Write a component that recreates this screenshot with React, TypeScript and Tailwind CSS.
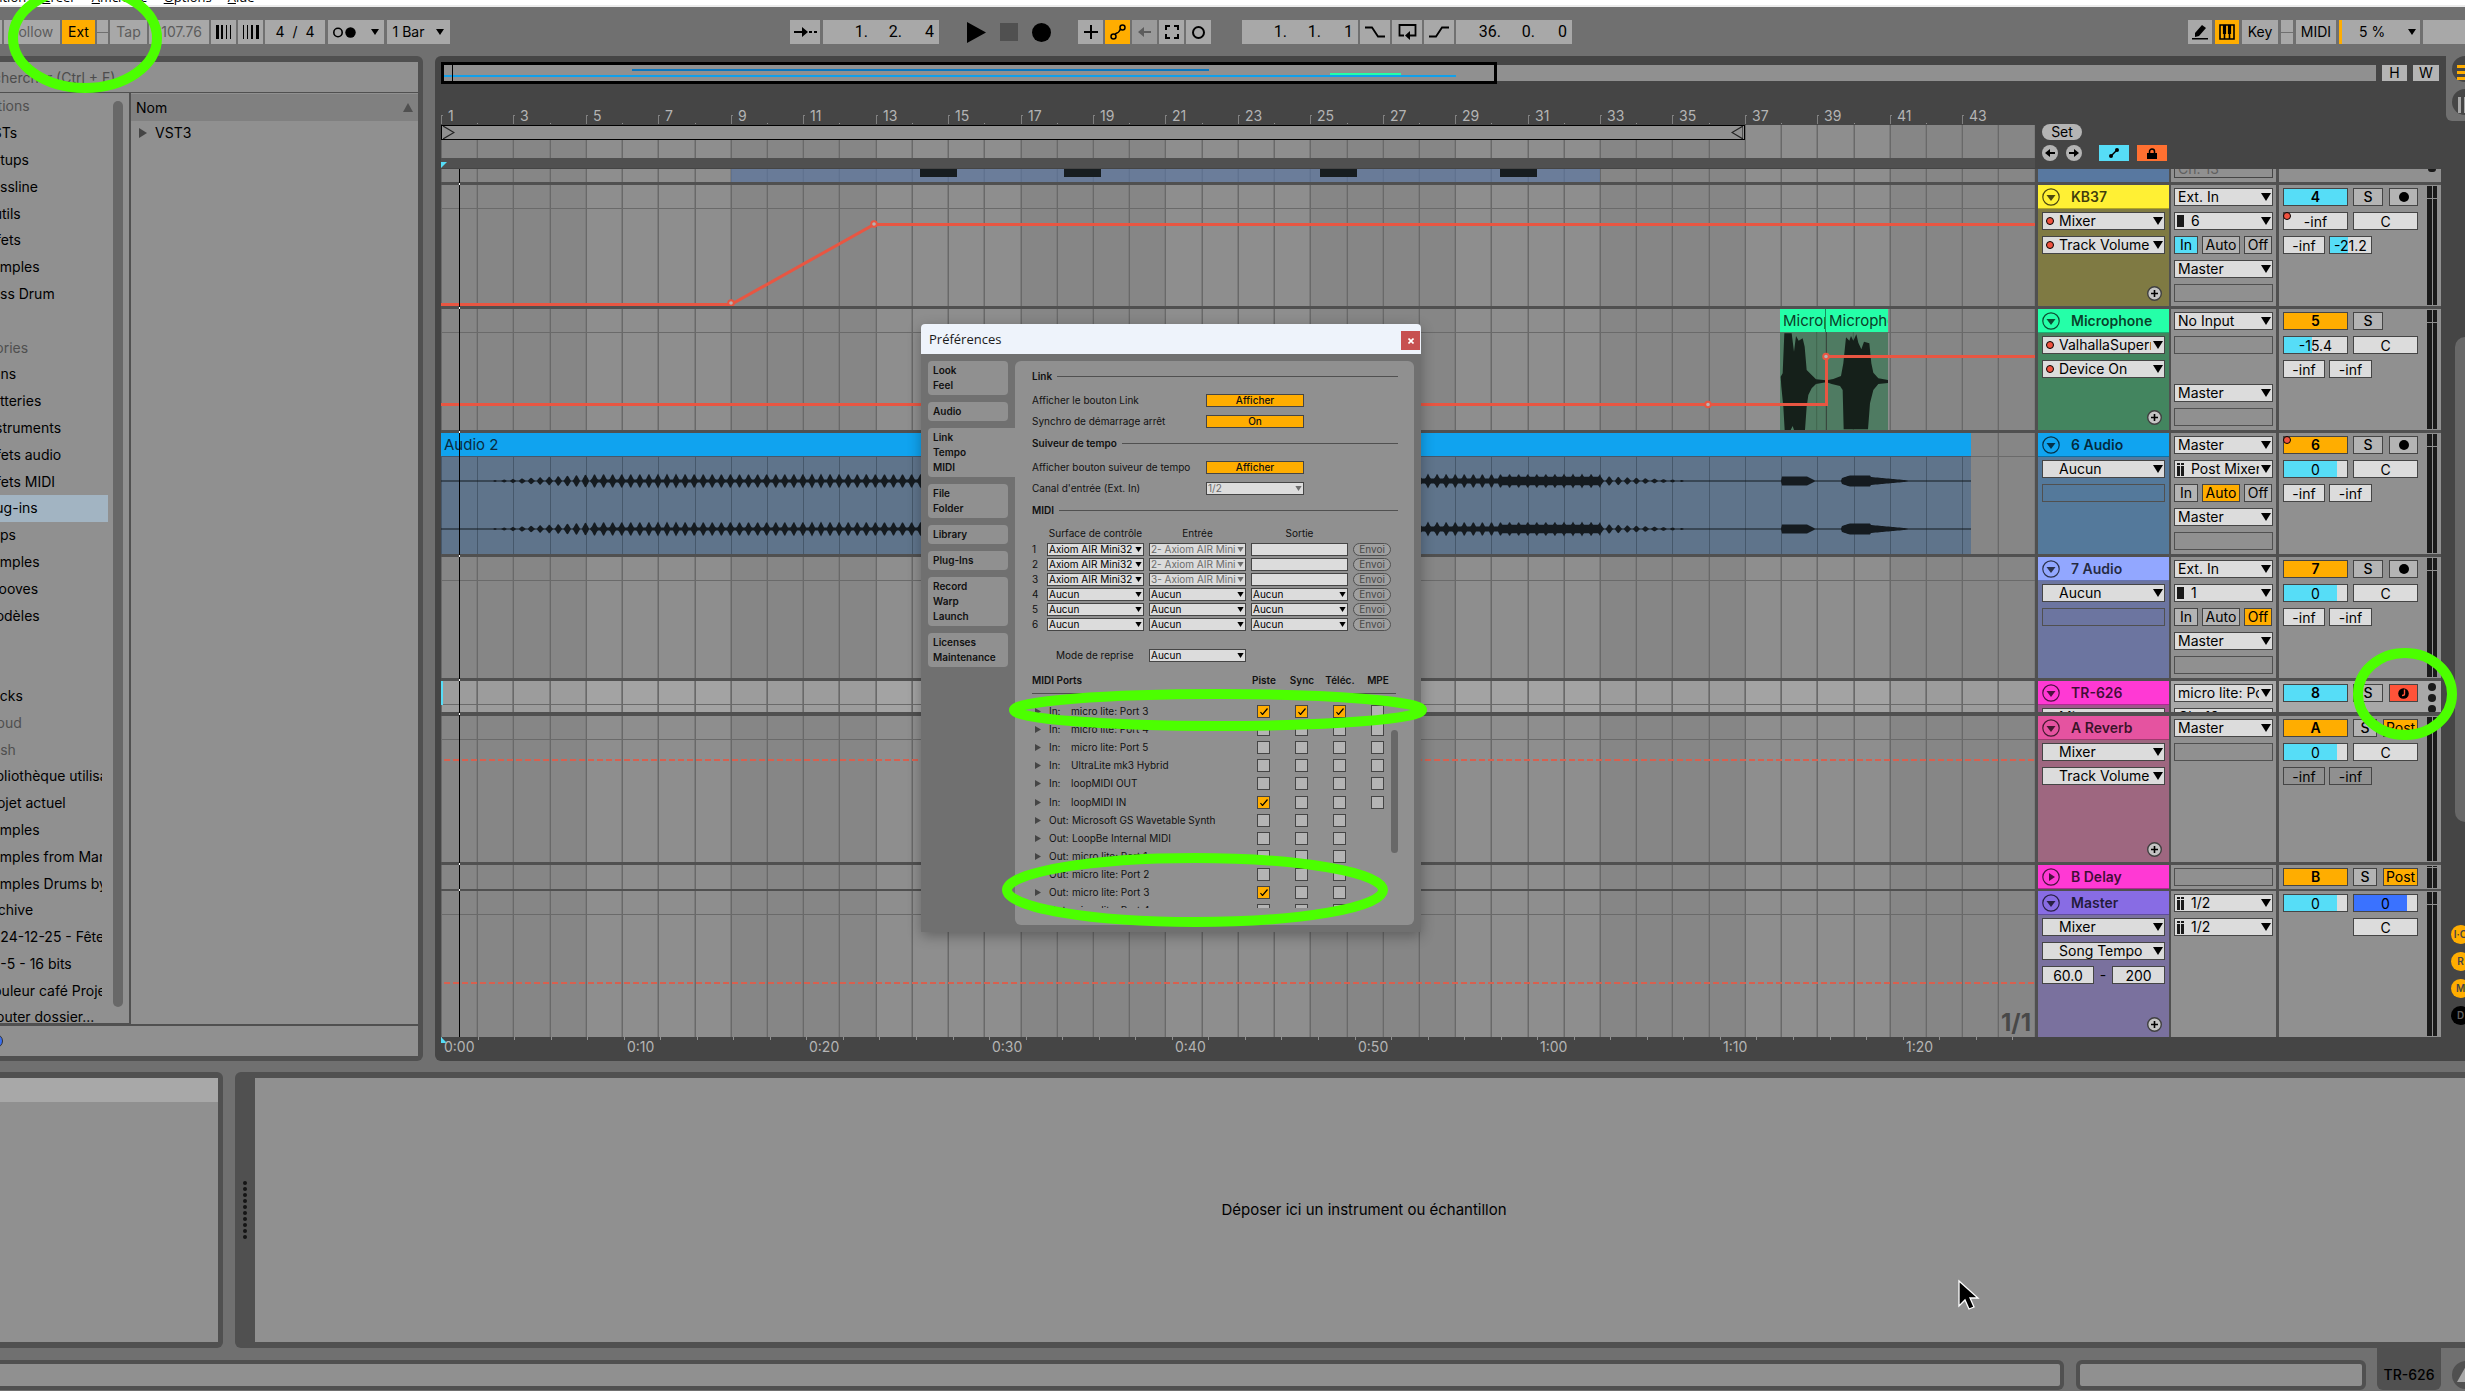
import type { ReactNode } from 'react';
import clsx from 'clsx';

// ━━━━━━━━━━━━━━━━━━━━━━━━━━━━━━━━━━━━━━━━━━
// Timeline helpers
// ━━━━━━━━━━━━━━━━━━━━━━━━━━━━━━━━━━━━━━━━━━

const BAR_COUNT = 44;
const bars = Array.from({ length: BAR_COUNT + 1 }, (_, i) => i);
const barX = (i: number) => Math.round(i * 36.22);

function Grid() {
  return (
    <svg className="absolute inset-0 h-full w-full" shapeRendering="crispEdges" aria-hidden="true">
      {bars.map((i) =>
        i % 8 >= 4 ? <rect key={i} x={barX(i)} y="0" width="37" height="100%" fill="#fff" opacity="0.07" /> : null
      )}
      {bars.map((i) => (
        <g key={i}>
          <rect x={barX(i)} y="0" width="1" height="100%" fill="#696969" />
          <rect x={barX(i) - 1} y="0" width="1" height="100%" fill="#7c7c7c" />
        </g>
      ))}
    </svg>
  );
}

// ━━━━━━━━━━━━━━━━━━━━━━━━━━━━━━━━━━━━━━━━━━
// Small controls
// ━━━━━━━━━━━━━━━━━━━━━━━━━━━━━━━━━━━━━━━━━━

interface PickProps {
  label: string;
  value: string;
  icon?: 'dot' | 'mono' | 'stereo' | 'indent';
  dim?: boolean;
  small?: boolean;
  className?: string;
}

function Pick({ label, value, icon, dim, small, className }: PickProps) {
  return (
    <div className={clsx('relative', className)}>
      <select
        aria-label={label}
        disabled={dim}
        className={clsx(
          'block w-full appearance-none overflow-hidden border border-[#454545] bg-[#dcdcdc] opacity-100',
          small ? 'h-[13px] pr-[9px] pl-px text-[10px] leading-[11px]' : 'h-[18px] pr-[13px] text-sm leading-4',
          !small && (icon ? 'pl-4' : 'pl-[3px]'),
          dim ? 'text-[#6a6a6a]' : 'text-black'
        )}
      >
        <option>{value}</option>
      </select>
      {icon === 'dot' && (
        <span className="absolute top-[5px] left-1 size-2 rounded-full border border-black bg-[#f0523f]" />
      )}
      {icon === 'mono' && <span className="absolute top-[3px] left-[3px] h-3 w-[7px] bg-[#1a1a1a]" />}
      {icon === 'stereo' && (
        <svg className="absolute top-[3px] left-[3px]" width="8" height="13" viewBox="0 0 8 13">
          <path d="M0 0h3v2H0zM4 0h3v2H4zM0 3h3v10H0zM4 3h3v10H4z" fill="#1a1a1a" />
        </svg>
      )}
      <svg
        className={clsx('pointer-events-none absolute', small ? 'top-1 right-[2px]' : 'top-[5px] right-[2px]')}
        width={small ? 7 : 10}
        height={small ? 5 : 8}
        viewBox="0 0 10 8"
      >
        <path d="M0 0h10L5 8z" fill={dim ? '#6c6c6c' : '#000'} />
      </svg>
    </div>
  );
}

function Empty({ className }: { className?: string }) {
  return <div className={clsx('h-[18px] border border-[#505050]', className)} />;
}

interface FieldProps {
  label: string;
  value: string;
  fill?: number;
  color?: string;
  clear?: boolean;
  className?: string;
}

function Field({ label, value, fill = 0, color = '#56ddf7', clear, className }: FieldProps) {
  const base = clear ? '#909090' : '#dcdcdc';
  return (
    <input
      aria-label={label}
      defaultValue={value}
      className={clsx('h-[18px] border border-[#454545] text-center text-sm leading-4', className)}
      style={{ background: `linear-gradient(to right, ${color} ${fill}%, ${base} ${fill}%)` }}
    />
  );
}

function Toggle({ children, on, className, label }: { children?: ReactNode; on?: string; className?: string; label?: string }) {
  return (
    <button
      aria-label={label}
      className={clsx(
        'flex h-[18px] items-center justify-center overflow-hidden border border-[#454545] text-sm leading-4 whitespace-nowrap',
        on === 'cyan' && 'bg-[#56ddf7]',
        on === 'amber' && 'bg-[#ffad00]',
        on === 'red' && 'bg-[#ff5339]',
        !on && 'bg-[#b4b4b4]',
        className
      )}
    >
      {children}
    </button>
  );
}

// ━━━━━━━━━━━━━━━━━━━━━━━━━━━━━━━━━━━━━━━━━━
// Transport bar
// ━━━━━━━━━━━━━━━━━━━━━━━━━━━━━━━━━━━━━━━━━━

function Tool({ children, className, label }: { children?: ReactNode; className?: string; label?: string }) {
  return (
    <button
      aria-label={label}
      className={clsx('flex h-6 shrink-0 items-center justify-center text-sm whitespace-nowrap', className)}
    >
      {children}
    </button>
  );
}

function Position({ label, parts }: { label: string; parts: string[] }) {
  return (
    <button
      aria-label={label}
      className="flex h-6 w-[116px] shrink-0 items-center justify-end bg-[#a8a8a8] pr-[5px] font-['Roboto',sans-serif] text-base"
    >
      {parts.map((p, i) => (
        <span key={i} className={clsx('text-right', i === 0 ? 'w-8' : i === 1 ? 'w-[34px]' : 'w-8')}>
          {p}
          {i < 2 && '.'}
        </span>
      ))}
    </button>
  );
}

function Down({ className }: { className?: string }) {
  return (
    <svg className={className} width="8" height="6" viewBox="0 0 8 6">
      <path d="M0 0h8L4 6z" />
    </svg>
  );
}

function Transport() {
  return (
    <header className="flex h-[49px] shrink-0 items-start pt-[13px]">
      <div className="flex gap-[2px]">
        <span className="h-6 w-[2px] bg-[#a8a8a8]" />
        <Tool className="w-14 bg-[#a8a8a8] text-[#5c5c5c]">Follow</Tool>
        <Tool className="w-[33px] bg-[#ffad00]">Ext</Tool>
        <span className="flex h-6 w-[11px] items-center bg-[#a8a8a8]">
          <i className="h-px w-full bg-[#707070]" />
        </span>
        <Tool className="w-[37px] bg-[#a8a8a8] text-[#5c5c5c]">Tap</Tool>
        <Tool className="w-[60px] bg-[#a8a8a8] text-[#5c5c5c]">
          <span className="mr-[7px] ml-auto">107.76</span>
        </Tool>
        <Tool label="Nudge down" className="w-[25px] bg-[#a8a8a8]">
          <svg width="16" height="14" viewBox="0 0 16 14">
            <path d="M0 0h3v14H0zM5 0h2v14H5zM10 0h1v14h-1zM14 0h1v14h-1z" />
          </svg>
        </Tool>
        <Tool label="Nudge up" className="w-[25px] bg-[#a8a8a8]">
          <svg width="16" height="14" viewBox="0 0 16 14">
            <path d="M0 0h1v14H0zM4 0h1v14H4zM8 0h2v14H8zM13 0h3v14h-3z" />
          </svg>
        </Tool>
        <Tool className="w-[60px] gap-2 bg-[#a8a8a8]">
          <span>4</span>
          <span>/</span>
          <span>4</span>
        </Tool>
        <Tool label="Metronome" className="ml-px w-14 gap-[15px] bg-[#a8a8a8]">
          <svg width="23" height="11" viewBox="0 0 23 11">
            <circle cx="5" cy="5.500" r="4.200" fill="none" stroke="#000" strokeWidth="1.600" />
            <circle cx="17.500" cy="5.500" r="5.200" />
          </svg>
          <Down />
        </Tool>
        <Tool className="ml-px w-[63px] gap-3 bg-[#a8a8a8]">
          1 Bar
          <Down />
        </Tool>
      </div>

      <div className="ml-[340px] flex">
        <Tool label="Follow playback" className="mr-[3px] w-[30px] bg-[#a8a8a8]">
          <svg width="23" height="12" viewBox="0 0 23 12">
            <path d="M0 5h8V1l6 5-6 5V7H0zM15 5h3v2h-3zM20 5h3v2h-3z" />
          </svg>
        </Tool>
        <Position label="Arrangement position" parts={['1', '2', '4']} />
        <Tool label="Play" className="ml-7">
          <svg width="19" height="21" viewBox="0 0 19 21">
            <path d="M0 0l19 10.500L0 21z" />
          </svg>
        </Tool>
        <Tool label="Stop" className="ml-[14px]">
          <span className="size-[18px] bg-[#505050]" />
        </Tool>
        <Tool label="Record" className="ml-[14px]">
          <span className="size-[19px] rounded-full bg-black" />
        </Tool>
        <Tool label="Overdub" className="ml-[27px] w-[25px] bg-[#a8a8a8]">
          <svg width="14" height="14" viewBox="0 0 14 14" stroke="#000" strokeWidth="2">
            <path d="M7 0v14M0 7h14" />
          </svg>
        </Tool>
        <Tool label="Automation arm" className="ml-[2px] w-[25px] bg-[#ffad00]">
          <svg width="16" height="16" viewBox="0 0 16 16" fill="none" stroke="#000" strokeWidth="1.500">
            <circle cx="3.500" cy="12.500" r="2.500" />
            <circle cx="12.500" cy="3.500" r="2.500" />
            <path d="M5 10.500c1-2 3-1 4-3s1-2 2-2.500" />
          </svg>
        </Tool>
        <Tool label="Re-enable automation" className="ml-[2px] w-[25px] bg-[#9a9a9a]">
          <svg width="13" height="10" viewBox="0 0 13 10">
            <path d="M13 4H6V0L0 5l6 5V6h7z" fill="#5c5c5c" />
          </svg>
        </Tool>
        <Tool label="Capture MIDI" className="ml-[2px] w-[25px] bg-[#a8a8a8]">
          <svg width="14" height="14" viewBox="0 0 14 14" fill="none" stroke="#000" strokeWidth="2">
            <path d="M1 5V1h4M9 1h4v4M13 9v4H9M5 13H1V9" />
          </svg>
        </Tool>
        <Tool label="Session record" className="ml-[2px] w-[25px] bg-[#a8a8a8]">
          <span className="size-[13px] rounded-full border-2 border-black" />
        </Tool>
        <span className="w-[31px]" />
        <Position label="Loop start" parts={['1', '1', '1']} />
        <Tool label="Punch in" className="ml-[2px] w-[30px] bg-[#a8a8a8]">
          <svg width="20" height="12" viewBox="0 0 20 12" fill="none" stroke="#000" strokeWidth="1.800">
            <path d="M0 1.500h7l6 9h7" />
          </svg>
        </Tool>
        <Tool label="Loop" className="ml-[2px] w-[30px] bg-[#a8a8a8]">
          <svg width="19" height="16" viewBox="0 0 19 16">
            <path d="M6 11.500H1.500V1h16v10.500H11" fill="none" stroke="#000" strokeWidth="1.800" />
            <path d="M12 7v9l-5-4.500z" />
          </svg>
        </Tool>
        <Tool label="Punch out" className="ml-[2px] w-[30px] bg-[#a8a8a8]">
          <svg width="20" height="12" viewBox="0 0 20 12" fill="none" stroke="#000" strokeWidth="1.800">
            <path d="M0 10.500h7l6-9h7" />
          </svg>
        </Tool>
        <span className="w-[2px]" />
        <Position label="Loop length" parts={['36', '0', '0']} />
      </div>

      <div className="ml-auto flex gap-[3px]">
        <Tool label="Draw mode" className="w-6 bg-[#a8a8a8]">
          <svg width="16" height="16" viewBox="0 0 16 16">
            <path d="M3 9l7-8 4 3-7 8-4 1z" />
            <path d="M0 14h16v1.500H0z" />
          </svg>
        </Tool>
        <Tool label="Computer MIDI keyboard" className="w-6 bg-[#ffad00]">
          <svg width="16" height="16" viewBox="0 0 16 16" fill="none" stroke="#000">
            <path d="M1 1h14v14H1zM5.500 9v6M10.500 9v6" strokeWidth="1.600" />
            <path d="M5.500 1v9M10.500 1v9" strokeWidth="3.200" />
          </svg>
        </Tool>
        <Tool className="w-9 bg-[#a8a8a8]">Key</Tool>
        <span className="flex h-6 w-3 items-center bg-[#a8a8a8]">
          <i className="h-px w-full bg-[#707070]" />
        </span>
        <Tool className="w-10 bg-[#a8a8a8]">MIDI</Tool>
        <Tool className="w-[81px] border-l-[3px] border-[#ffad00] bg-[#a8a8a8] pr-1 pl-[17px]">
          5 %
          <Down className="ml-auto" />
        </Tool>
        <span className="h-6 w-[42px] bg-[#a8a8a8]" />
      </div>
    </header>
  );
}

// ━━━━━━━━━━━━━━━━━━━━━━━━━━━━━━━━━━━━━━━━━━
// Browser
// ━━━━━━━━━━━━━━━━━━━━━━━━━━━━━━━━━━━━━━━━━━

const places: { name: string; kind?: 'head' | 'dim' | 'active' }[] = [
  { name: 'Collections', kind: 'head' },
  { name: 'VSTs' },
  { name: 'Setups' },
  { name: 'Bassline' },
  { name: 'Outils' },
  { name: 'Effets' },
  { name: 'Samples' },
  { name: 'Bass Drum' },
  { name: '' },
  { name: 'Catégories', kind: 'head' },
  { name: 'Sons' },
  { name: 'Batteries' },
  { name: 'Instruments' },
  { name: 'Effets audio' },
  { name: 'Effets MIDI' },
  { name: 'Plug-ins', kind: 'active' },
  { name: 'Clips' },
  { name: 'Samples' },
  { name: 'Grooves' },
  { name: 'Modèles' },
  { name: '' },
  { name: '' },
  { name: 'Packs' },
  { name: 'Cloud', kind: 'dim' },
  { name: 'Push', kind: 'dim' },
  { name: 'Bibliothèque utilisateur' },
  { name: 'Projet actuel' },
  { name: 'Samples' },
  { name: 'Samples from Mars' },
  { name: 'Samples Drums by' },
  { name: 'Archive' },
  { name: '2024-12-25 - Fête' },
  { name: '24-5 - 16 bits' },
  { name: 'Couleur café Projet' },
  { name: 'Ajouter dossier...' },
];

function Browser() {
  return (
    <aside className="flex w-[423px] shrink-0 flex-col rounded-r-md bg-[#505050] pt-[6px] pr-[5px] pb-[5px]">
      <div className="h-[30px] overflow-hidden bg-[#909090]">
        <input
          aria-label="Rechercher"
          placeholder="Rechercher (Ctrl + F)"
          className="-ml-6 h-[30px] w-80 text-sm placeholder:text-[#4c4c4c] placeholder:opacity-100"
        />
      </div>
      <div className="mt-px flex min-h-0 flex-1">
        <nav className="relative h-[930px] w-[129px] overflow-hidden bg-[#909090]">
          <div className="flex h-[938px] w-[102px] flex-col">
            {places.map((p, i) => (
              <a
                key={i}
                href="#"
                className={clsx(
                  'flex flex-1 items-center overflow-hidden text-sm whitespace-nowrap',
                  p.kind === 'active' && '-mr-[6px] bg-[#a2b4c2]',
                  p.kind === 'head' || p.kind === 'dim' ? 'text-[#4f4f4f]' : 'text-black'
                )}
              >
                <span className={p.kind === 'head' ? '-ml-11' : '-ml-[17px]'}>{p.name}</span>
              </a>
            ))}
          </div>
          <span className="absolute top-2 right-[6px] bottom-4 w-[10px] rounded-full bg-[#686868]" />
        </nav>
        <section className="ml-[2px] flex-1 bg-[#909090]">
          <button className="mt-px flex h-[27px] w-full items-center justify-between bg-[#808080] px-[5px] text-sm">
            Nom
            <svg width="10" height="9" viewBox="0 0 10 9">
              <path d="M0 9h10L5 0z" fill="#505050" />
            </svg>
          </button>
          <button className="flex h-6 items-center gap-2 pl-2 text-sm">
            <svg width="8" height="10" viewBox="0 0 8 10">
              <path d="M0 0v10l8-5z" fill="#454545" />
            </svg>
            VST3
          </button>
        </section>
      </div>
      <div className="mt-[2px] h-[30px] overflow-hidden bg-[#909090]">
        <span className="mt-2 -ml-[11px] block size-[14px] rounded-full border border-[#303030] bg-[#3a6ff0]" />
      </div>
    </aside>
  );
}

// ━━━━━━━━━━━━━━━━━━━━━━━━━━━━━━━━━━━━━━━━━━
// Waveforms and automation
// ━━━━━━━━━━━━━━━━━━━━━━━━━━━━━━━━━━━━━━━━━━

function wavePath() {
  const top: string[] = [];
  const bottom: string[] = [];
  for (let x = 0; x <= 1530; x += 1) {
    const pulse = Math.max(0, 1 - Math.abs(((x + 5) % 9.06) - 4.5) / 3.8);
    let peak = 0;
    let body = 0.6;
    if (x > 40 && x < 150) peak = ((x - 40) / 110) * 7.5;
    if (x >= 150 && x < 1160) {
      peak = 7.5;
      body = x < 500 ? 1.4 : 2.6;
      if (x > 1060) body = 4.2;
    }
    if (x >= 1160 && x < 1260) peak = ((1260 - x) / 100) * 5.5;
    if (x >= 1341 && x < 1366) body = 4.6;
    if (x >= 1366 && x < 1374) body = (1374 - x) / 2 + 0.6;
    if (x >= 1401 && x < 1430) body = 3 + Math.min(2.4, (x - 1401) / 3);
    if (x >= 1430 && x < 1468) body = 4 - (x - 1430) / 11;
    const a = Math.max(body, peak * pulse);
    top.push(`${x} ${(24 - a).toFixed(1)}`);
    bottom.unshift(`${x} ${(24 + a).toFixed(1)}`);
  }
  return `M${top.join('L')}L${bottom.join('L')}Z`;
}

const audioWave = wavePath();

function Automation({ d, points = [], dashed }: { d: string; points?: [number, number][]; dashed?: boolean }) {
  return (
    <svg className="absolute inset-0 h-full w-full" aria-hidden="true">
      <path
        d={d}
        fill="none"
        stroke={dashed ? '#d8604f' : '#e85642'}
        strokeWidth={dashed ? 2 : 3}
        strokeDasharray={dashed ? '6 3' : undefined}
      />
      {points.map(([x, y]) => (
        <circle key={x} cx={x} cy={y} r="2.800" fill="#b4b4b4" stroke="#e85642" strokeWidth="2" />
      ))}
    </svg>
  );
}

function ChordsClip() {
  return (
    <div className="absolute top-0 left-[290px] h-[13px] w-[869px] bg-[#5c76a0]/70">
      {[189, 333, 589, 769].map((x) => (
        <span key={x} className="absolute top-0 h-2 w-[37px] bg-[#171d20]" style={{ left: x }} />
      ))}
    </div>
  );
}

function MicClips() {
  return (
    <div className="absolute top-0 left-[1339px] w-[108px]">
      <div className="flex h-[23px] bg-[#25ffa8] text-[15px] leading-6 text-[#0c3d28]">
        <span className="w-[46px] overflow-hidden border-r border-[#17905f] pl-[3px]">Microphone</span>
        <span className="w-[62px] overflow-hidden pl-[3px]">Microphone</span>
      </div>
      <svg className="block" width="108" height="98" viewBox="420 156 324 294">
        <path d="M420 156h324v294H420z" fill="#4f7b62" />
        <path d="M530 156v294M640 156v294" stroke="#42664f" strokeWidth="3" />
        <path d="M559 156v294" stroke="#353d38" strokeWidth="3" />
        <path
          d="M422 290l6-10 5-120h22l7 55 6-47 8 14 12-7 6 25 6 70 15 15 13 13 30 3v6l-30 5-13 13-10 20-5 35-5 70h-33l-4-12-6 12h-18l-4-70-6-60zM560 301l20-4 23-9 7-38 8-78 10 10 5-14 7 14 9-19 6 25 9 20 8-23 16 5 6 60 6 28 15 17 29 5v9l-29 3-15 18-10 40-6 78h-73l-3-118-8-12-25-6-15-5z"
          fill="#15201a"
        />
      </svg>
    </div>
  );
}

function AudioClip() {
  return (
    <div className="absolute top-0 left-0 w-[1530px]">
      <div className="h-[23px] bg-[#10a3ef] pl-[3px] text-[15px] leading-6 text-[#0a2c40]">Audio 2</div>
      <div className="relative h-[98px] border-t border-[#46586b] bg-[#5f748b]">
        <svg className="block" width="1530" height="97">
          {bars.slice(0, 43).map((i) => (
            <rect key={i} x={barX(i)} y="0" width="1" height="97" fill="#46586b" />
          ))}
          <path d={audioWave} fill="#151b20" />
          <path d={audioWave} fill="#151b20" transform="translate(0 48)" />
        </svg>
      </div>
    </div>
  );
}

// ━━━━━━━━━━━━━━━━━━━━━━━━━━━━━━━━━━━━━━━━━━
// Tracks
// ━━━━━━━━━━━━━━━━━━━━━━━━━━━━━━━━━━━━━━━━━━

interface TrackProps {
  name: string;
  height: string;
  title: string;
  body: string;
  lane?: ReactNode;
  head?: ReactNode;
  io?: ReactNode;
  mixer?: ReactNode;
  add?: boolean;
  folded?: boolean;
  selected?: boolean;
  midi?: boolean;
}

function Track({ name, height, title, body, lane, head, io, mixer, add, folded, selected, midi }: TrackProps) {
  const tone = selected ? 'bg-[#a8a8a8]' : 'bg-[#909090]';
  return (
    <div className={clsx('flex shrink-0 overflow-hidden', height)}>
      <div className={clsx('relative flex-1 overflow-hidden', selected ? 'bg-[#9c9c9c]' : 'bg-[#868686]')}>
        <Grid />
        {!folded && <i className="absolute inset-x-0 top-[23px] h-px bg-[#6a6a6a]" />}
        {lane}
      </div>
      <div className={clsx('relative ml-[3px] w-[131px] shrink-0', body)}>
        <button
          className={clsx(
            'flex h-6 w-full items-center gap-[11px] border-b border-black/30 pl-1 text-sm font-semibold text-black/75',
            title
          )}
        >
          <svg width="18" height="18" viewBox="0 0 18 18">
            <circle cx="9" cy="9" r="8.200" fill="none" stroke="#000" strokeOpacity="0.7" strokeWidth="1.200" />
            <path d={folded ? 'M7 5v8l6-4z' : 'M4.500 7h9L9 13z'} fillOpacity="0.7" />
          </svg>
          {name}
        </button>
        <div className="flex flex-col gap-[6px] px-1 pt-[3px]">{head}</div>
        {add && (
          <button aria-label="Add automation lane" className="absolute right-[7px] bottom-[5px]">
            <svg width="15" height="15" viewBox="0 0 15 15">
              <circle cx="7.500" cy="7.500" r="6.800" fill="#c4c4c4" stroke="#404040" strokeWidth="1.400" />
              <path d="M7.500 4v7M4 7.500h7" stroke="#000" strokeWidth="1.600" />
            </svg>
          </button>
        )}
      </div>
      <div className={clsx('ml-[2px] flex w-[105px] shrink-0 flex-col gap-[6px] px-[3px] pt-[3px]', tone)}>{io}</div>
      <div className={clsx('ml-[3px] flex w-[162px] shrink-0 justify-between pr-[4px] pl-1', tone)}>
        <div className="flex w-[135px] flex-col gap-[6px] pt-[3px]">{mixer}</div>
        {midi ? (
          <div className="flex w-[10px] flex-col items-center gap-[3px] pt-[2px]">
            <i className="size-2 shrink-0 rounded-full bg-[#1a1a1a]" />
            <i className="size-2 shrink-0 rounded-full bg-[#1a1a1a]" />
            <i className="size-2 shrink-0 rounded-full bg-[#1a1a1a]" />
          </div>
        ) : (
          <div className="relative my-px flex w-[10px] gap-px">
            <i className="flex-1 bg-[#1a1a1a]" />
            <i className="flex-1 bg-[#1a1a1a]" />
            <i className={clsx('absolute inset-x-0 h-px bg-[#909090]', folded ? 'top-px' : 'top-3')} />
          </div>
        )}
      </div>
    </div>
  );
}

function Monitor({ active }: { active: 'In' | 'Auto' | 'Off' }) {
  return (
    <div className="flex gap-1">
      <Toggle className="w-6" on={active === 'In' ? 'cyan' : undefined}>In</Toggle>
      <Toggle className="w-[38px]" on={active === 'Auto' ? 'amber' : undefined}>Auto</Toggle>
      <Toggle className="w-7" on={active === 'Off' ? 'amber' : undefined}>Off</Toggle>
    </div>
  );
}

interface StripProps {
  id: string;
  on: 'cyan' | 'amber';
  vol: string;
  fill?: number;
  arm?: 'audio' | 'midi' | 'post';
  peaks?: [string, string];
  peakFill?: number;
  clear?: boolean;
  dot?: 'id' | 'vol';
  short?: boolean;
}

const autoDot = <i className="absolute top-0 left-0 size-2 rounded-full border border-black bg-[#f0523f]" />;

function Strip({ id, on, vol, fill = 0, arm, peaks = ['-inf', '-inf'], peakFill = 0, clear, dot, short }: StripProps) {
  return (
    <>
      <div className="relative flex">
        <Toggle className="w-[65px] font-semibold" on={on}>{id}</Toggle>
        <Toggle className={clsx('ml-[5px] font-medium', arm === 'post' ? 'w-6' : 'w-[30px]')}>S</Toggle>
        {arm === 'audio' && (
          <Toggle className="ml-[6px] w-[29px]" label="Arm">
            <i className="size-[10px] rounded-full bg-black" />
          </Toggle>
        )}
        {arm === 'midi' && (
          <Toggle className="ml-[6px] w-[29px]" label="Arm" on="red">
            <svg width="11" height="11" viewBox="0 0 11 11">
              <circle cx="5.500" cy="5.500" r="5.300" />
              <path d="M6.500 1.500v4.500c0 1-1 1.500-2.500 1.500" stroke="#ff5339" strokeWidth="1.400" fill="none" />
            </svg>
          </Toggle>
        )}
        {arm === 'post' && <Toggle className="ml-[6px] w-[35px]" on="amber">Post</Toggle>}
        {dot === 'id' && autoDot}
      </div>
      {!short && (
        <>
          <div className="relative flex gap-[5px]">
            <Field label={`Volume ${id}`} value={vol} fill={fill} className="w-[65px]" />
            <Field label={`Pan ${id}`} value="C" className="w-[65px]" />
            {dot === 'vol' && autoDot}
          </div>
          <div className="flex gap-1">
            <Field label={`Send A ${id}`} value={peaks[0]} clear={clear} className="w-[42px]" />
            <Field label={`Send B ${id}`} value={peaks[1]} fill={peakFill} clear={clear} className="w-[43px]" />
          </div>
        </>
      )}
    </>
  );
}

const Rule = () => <div className="h-[3px] shrink-0" />;

function Tracks() {
  return (
    <div className="relative flex flex-1 flex-col bg-[#505050]">
      {/* Bottom slice of the track scrolled off above */}
      <div className="flex h-[13px] shrink-0 overflow-hidden">
        <div className="relative flex-1 overflow-hidden bg-[#868686]">
          <Grid />
          <ChordsClip />
        </div>
        <div className="ml-[3px] w-[131px] bg-[#5878a0]" />
        <div className="ml-[2px] flex w-[105px] flex-col justify-end bg-[#909090] px-[3px] pb-1">
          <div className="h-[18px] shrink-0 border border-[#454545] pl-[3px] text-sm leading-4 text-[#606060]">Ch. 13</div>
        </div>
        <div className="ml-[3px] flex w-[162px] items-start justify-end bg-[#909090] pr-[5px]">
          <i className="h-[3px] w-2 rounded-b-full bg-[#1a1a1a]" />
        </div>
      </div>
      <Rule />
      <Track
        name="KB37"
        height="h-[121px]"
        title="bg-[#fff034]"
        body="bg-[#7f7a43]"
        add
        lane={<Automation d="M0 119.500H290L433 39.500H3000" points={[[290, 118], [433, 39]]} />}
        head={
          <>
            <Pick label="Device" value="Mixer" icon="dot" />
            <Pick label="Parameter" value="Track Volume" icon="dot" />
          </>
        }
        io={
          <>
            <Pick label="Input type" value="Ext. In" />
            <Pick label="Input channel" value="6" icon="mono" />
            <Monitor active="In" />
            <Pick label="Output type" value="Master" />
            <Empty />
          </>
        }
        mixer={<Strip id="4" on="cyan" vol="-inf" arm="audio" peaks={['-inf', '-21.2']} peakFill={45} dot="vol" />}
      />
      <Rule />
      <Track
        name="Microphone"
        height="h-[121px]"
        title="bg-[#25ffa8]"
        body="bg-[#43855f]"
        add
        lane={
          <>
            <MicClips />
            <Automation d="M0 95.500H1385.500V47.500H3000" points={[[1267, 95.5], [1385, 47.5]]} />
          </>
        }
        head={
          <>
            <Pick label="Device" value="ValhallaSupermassive" icon="dot" />
            <Pick label="Parameter" value="Device On" icon="dot" />
          </>
        }
        io={
          <>
            <Pick label="Input type" value="No Input" />
            <Empty />
            <div className="h-[18px]" />
            <Pick label="Output type" value="Master" />
            <Empty />
          </>
        }
        mixer={<Strip id="5" on="amber" vol="-15.4" fill={45} />}
      />
      <Rule />
      <Track
        name="6 Audio"
        height="h-[121px]"
        title="bg-[#10a4f0]"
        body="bg-[#54799b]"
        lane={<AudioClip />}
        head={
          <>
            <Pick label="Device" value="Aucun" icon="indent" />
            <Empty />
          </>
        }
        io={
          <>
            <Pick label="Input type" value="Master" />
            <Pick label="Input channel" value="Post Mixer" icon="stereo" />
            <Monitor active="Auto" />
            <Pick label="Output type" value="Master" />
            <Empty />
          </>
        }
        mixer={<Strip id="6" on="amber" vol="0" fill={84} arm="audio" dot="id" />}
      />
      <Rule />
      <Track
        name="7 Audio"
        height="h-[121px]"
        title="bg-[#92a7ff]"
        body="bg-[#6c75a0]"
        head={
          <>
            <Pick label="Device" value="Aucun" icon="indent" />
            <Empty />
          </>
        }
        io={
          <>
            <Pick label="Input type" value="Ext. In" />
            <Pick label="Input channel" value="1" icon="mono" />
            <Monitor active="Off" />
            <Pick label="Output type" value="Master" />
            <Empty />
          </>
        }
        mixer={<Strip id="7" on="amber" vol="0" fill={84} arm="audio" />}
      />
      <Rule />
      <Track
        name="TR-626"
        height="h-[31px]"
        title="bg-[#ff39d4]"
        body="bg-[#a0558c]"
        selected
        midi
        lane={<i className="absolute top-0 left-0 h-6 w-[2px] bg-[#56ddf7]" />}
        head={<Pick label="Device" value="Mixer" icon="indent" />}
        io={
          <>
            <Pick label="MIDI from" value="micro lite: Port 3" />
            <Pick label="MIDI channel" value="Ch. 10" />
          </>
        }
        mixer={<Strip id="8" on="cyan" vol="0" arm="midi" short />}
      />
      <div className="h-1 shrink-0" />
      <Track
        name="A Reverb"
        height="h-[146px]"
        title="bg-[#e553a0]"
        body="bg-[#9e6780]"
        add
        lane={<Automation d="M3 44H3000" dashed />}
        head={
          <>
            <Pick label="Device" value="Mixer" icon="indent" />
            <Pick label="Parameter" value="Track Volume" icon="indent" />
          </>
        }
        io={
          <>
            <Pick label="Output type" value="Master" />
            <Empty />
          </>
        }
        mixer={<Strip id="A" on="amber" vol="0" fill={84} arm="post" clear />}
      />
      <Rule />
      <Track
        name="B Delay"
        height="h-6"
        title="bg-[#ff39d4]"
        body="bg-[#ff39d4]"
        folded
        io={<Empty />}
        mixer={<Strip id="B" on="amber" vol="0" arm="post" short />}
      />
      <div className="h-[2px] shrink-0" />
      <Track
        name="Master"
        height="h-[146px]"
        title="bg-[#886ce4]"
        body="bg-[#7a719e]"
        add
        lane={
          <>
            <Automation d="M3 92H3000" dashed />
            <span className="absolute right-1 bottom-0 text-2xl leading-7 font-bold text-[#484848]">1/1</span>
          </>
        }
        head={
          <>
            <Pick label="Device" value="Mixer" icon="indent" />
            <Pick label="Parameter" value="Song Tempo" icon="indent" />
            <div className="flex items-center justify-between text-sm leading-4">
              <Field label="Tempo minimum" value="60.0" className="w-[52px]" />
              -
              <Field label="Tempo maximum" value="200" className="w-[53px]" />
            </div>
          </>
        }
        io={
          <>
            <Pick label="Cue out" value="1/2" icon="stereo" />
            <Pick label="Master out" value="1/2" icon="stereo" />
          </>
        }
        mixer={
          <>
            <div className="flex gap-[5px]">
              <Field label="Master volume" value="0" fill={84} className="w-[65px]" />
              <Field label="Cue volume" value="0" fill={84} color="#3a72ff" className="w-[65px]" />
            </div>
            <Field label="Master pan" value="C" className="ml-[70px] w-[65px]" />
          </>
        }
      />
      <i className="absolute inset-y-0 left-[18px] w-px bg-black" />
      {[14, 138, 262, 386, 510, 544, 694, 720].map((y) => (
        <i key={y} className="absolute left-[18px] h-[2px] w-px bg-white" style={{ top: y }} />
      ))}
    </div>
  );
}

// ━━━━━━━━━━━━━━━━━━━━━━━━━━━━━━━━━━━━━━━━━━
// Arrangement
// ━━━━━━━━━━━━━━━━━━━━━━━━━━━━━━━━━━━━━━━━━━

function Overview() {
  return (
    <div className="flex gap-[6px] pt-[6px] pr-[26px]">
      <div className="relative h-[22px] flex-1">
        <div className="absolute inset-x-0 inset-y-[3px] bg-[#909090]" />
        <div className="absolute top-0 left-0 h-[22px] w-[1056px] border-[3px] border-black" />
        <i className="absolute top-[7px] left-[191px] h-[2px] w-[577px] bg-[#0b77c0]" />
        <i className="absolute top-[11px] left-[889px] h-[2px] w-[71px] bg-[#25ffa8]" />
        <i className="absolute top-[13px] left-[3px] h-[2px] w-[1012px] bg-[#12a0ea]" />
        <i className="absolute top-[3px] left-[11px] h-4 w-px bg-black" />
      </div>
      <button className="mt-[3px] h-4 w-[25px] bg-[#b4b4b4] text-sm leading-4">H</button>
      <button className="mt-[3px] h-4 w-[26px] bg-[#b4b4b4] text-sm leading-4">W</button>
    </div>
  );
}

function Ruler() {
  return (
    <div className="relative flex-1 overflow-hidden">
      <div className="relative h-[41px]">
        {bars.slice(0, 43).map((i) =>
          i % 2 === 0 ? (
            <span
              key={i}
              className="absolute top-[23px] flex h-[17px] gap-[5px] text-sm leading-[17px] text-[#b4b4b4]"
              style={{ left: barX(i) }}
            >
              <i className="mt-[8px] h-[9px] w-[2px] border-t border-l border-[#808080]" />
              {i + 1}
            </span>
          ) : (
            <i key={i} className="absolute bottom-px h-px w-px bg-[#909090]" style={{ left: barX(i) }} />
          )
        )}
      </div>
      <div className="relative h-[33px] bg-[#868686]">
        <Grid />
        <div className="absolute top-0 left-0 flex h-[15px] w-[1304px] items-center justify-between border border-black bg-[#909090] px-px">
          <svg width="12" height="13" viewBox="0 0 12 13" fill="none" stroke="#222" strokeWidth="1.200">
            <path d="M0 0l11 6.500L0 13" />
          </svg>
          <svg width="12" height="13" viewBox="0 0 12 13" fill="none" stroke="#222" strokeWidth="1.200">
            <path d="M12 0L1 6.500 12 13z" />
          </svg>
        </div>
      </div>
      <div className="h-[10px] bg-[#505050]">
        <svg className="block" width="6" height="10">
          <path d="M0 4h6l-6 6z" fill="#56ddf7" />
        </svg>
      </div>
    </div>
  );
}

const rail = ['I·O', 'R', 'M', 'D'];
const times = ['0:00', '0:10', '0:20', '0:30', '0:40', '0:50', '1:00', '1:10', '1:20'];

function Arrangement() {
  return (
    <main className="relative flex min-w-0 flex-1 flex-col rounded-l-md bg-[#454545] pl-[6px]">
      <Overview />
      <div className="flex h-[85px]">
        <Ruler />
        <div className="flex w-[430px] flex-col gap-[5px] pt-10 pl-[7px]">
          <button className="h-4 w-10 rounded-full bg-[#b4b4b4] text-sm leading-4">Set</button>
          <div className="flex items-center">
            <button aria-label="Previous locator" className="flex size-4 items-center justify-center rounded-full bg-[#b4b4b4]">
              <svg width="10" height="8" viewBox="0 0 10 8">
                <path d="M10 3H5V0L0 4l5 4V5h5z" />
              </svg>
            </button>
            <button aria-label="Next locator" className="ml-2 flex size-4 items-center justify-center rounded-full bg-[#b4b4b4]">
              <svg width="10" height="8" viewBox="0 0 10 8">
                <path d="M0 3h5V0l5 4-5 4V5H0z" />
              </svg>
            </button>
            <button aria-label="Automation mode" className="ml-[17px] flex h-4 w-[30px] items-center justify-center bg-[#56ddf7]">
              <svg width="10" height="10" viewBox="0 0 10 10">
                <circle cx="2" cy="8" r="2" />
                <circle cx="8" cy="2" r="2" />
                <path d="M2 8l6-6" stroke="#000" strokeWidth="1.500" />
              </svg>
            </button>
            <button aria-label="Lock envelopes" className="ml-2 flex h-4 w-[30px] items-center justify-center bg-[#ff7031]">
              <svg width="10" height="11" viewBox="0 0 10 11">
                <path d="M0 5h10v6H0z" />
                <path d="M2.500 5V3.500a2.500 2.500 0 015 0V5" fill="none" stroke="#000" strokeWidth="1.500" />
              </svg>
            </button>
          </div>
        </div>
      </div>
      <div className="flex flex-1">
        <Tracks />
        <div className="relative w-6 shrink-0">
          <span className="absolute top-[168px] left-[14px] h-[485px] w-[10px] rounded-l-full bg-[#686868]" />
          <div className="absolute top-[756px] left-[10px] flex flex-col gap-2">
            {rail.map((r) => (
              <button
                key={r}
                className={clsx(
                  'flex size-[19px] shrink-0 items-center justify-center rounded-full text-[10px] font-semibold whitespace-nowrap',
                  r === 'D' ? 'bg-black text-[#606060]' : 'bg-[#ffad00] text-[#454545]'
                )}
              >
                {r}
              </button>
            ))}
          </div>
        </div>
      </div>
      <div className="relative h-6 text-sm leading-5 text-[#b4b4b4]">
        {Array.from({ length: 44 }, (_, i) => (
          <i key={i} className="absolute top-0 h-[3px] w-px bg-[#909090]" style={{ left: Math.round(i * 36.54) }} />
        ))}
        <svg className="absolute top-0 left-0" width="6" height="6">
          <path d="M0 0l6 6H0z" fill="#56ddf7" />
        </svg>
        {times.map((t, i) => (
          <span key={t} className="absolute top-0 pl-[3px]" style={{ left: Math.round(i * 182.7) }}>
            {t}
          </span>
        ))}
      </div>

      {/* View selectors */}
      <div className="absolute top-0 right-0 h-[65px] w-[19px] rounded-bl-md bg-[#707070] pl-[6px]">
        <button aria-label="Arrangement view" className="block size-[26px] rounded-full bg-[#454545] pt-[6px] pl-[5px]">
          <svg width="16" height="15" viewBox="0 0 16 15">
            <path d="M0 0h16v3H0zM0 6h16v3H0zM0 12h16v3H0z" fill="#ffad00" />
          </svg>
        </button>
        <button aria-label="Session view" className="mt-[7px] block size-[26px] rounded-full bg-[#454545] pt-[5px] pl-[6px]">
          <svg width="15" height="16" viewBox="0 0 15 16">
            <path d="M0 0h3v16H0zM6 0h3v16H6zM12 0h3v16h-3z" fill="#a8a8a8" />
          </svg>
        </button>
      </div>
    </main>
  );
}

// ━━━━━━━━━━━━━━━━━━━━━━━━━━━━━━━━━━━━━━━━━━
// Preferences dialog
// ━━━━━━━━━━━━━━━━━━━━━━━━━━━━━━━━━━━━━━━━━━

const prefTabs = [
  ['Look', 'Feel'],
  ['Audio'],
  ['Link', 'Tempo', 'MIDI'],
  ['File', 'Folder'],
  ['Library'],
  ['Plug-Ins'],
  ['Record', 'Warp', 'Launch'],
  ['Licenses', 'Maintenance'],
];

const surfaces = [
  ['Axiom AIR Mini32', '2- Axiom AIR Mini32', ''],
  ['Axiom AIR Mini32', '2- Axiom AIR Mini32', ''],
  ['Axiom AIR Mini32', '3- Axiom AIR Mini32', ''],
  ['Aucun', 'Aucun', 'Aucun'],
  ['Aucun', 'Aucun', 'Aucun'],
  ['Aucun', 'Aucun', 'Aucun'],
];

const portColumns = ['Piste', 'Sync', 'Téléc.', 'MPE'];

const ports: { dir: 'In' | 'Out'; name: string; on: number[] }[] = [
  { dir: 'In', name: 'micro lite: Port 3', on: [0, 1, 2] },
  { dir: 'In', name: 'micro lite: Port 4', on: [] },
  { dir: 'In', name: 'micro lite: Port 5', on: [] },
  { dir: 'In', name: 'UltraLite mk3 Hybrid', on: [] },
  { dir: 'In', name: 'loopMIDI OUT', on: [] },
  { dir: 'In', name: 'loopMIDI IN', on: [0] },
  { dir: 'Out', name: 'Microsoft GS Wavetable Synth', on: [] },
  { dir: 'Out', name: 'LoopBe Internal MIDI', on: [] },
  { dir: 'Out', name: 'micro lite: Port 1', on: [] },
  { dir: 'Out', name: 'micro lite: Port 2', on: [] },
  { dir: 'Out', name: 'micro lite: Port 3', on: [0] },
  { dir: 'Out', name: 'micro lite: Port 4', on: [] },
];

function PrefHeading({ children }: { children: ReactNode }) {
  return (
    <h3 className="mt-1 mb-[6px] flex h-[15px] items-center gap-[5px] font-semibold">
      {children}
      <i className="h-px flex-1 bg-[#505050]" />
    </h3>
  );
}

function PrefRow({ label, children }: { label: string; children: ReactNode }) {
  return (
    <div className="flex h-[21px] items-center">
      <span className="w-[174px] shrink-0 whitespace-nowrap">{label}</span>
      {children}
    </div>
  );
}

function PrefButton({ children, label }: { children: ReactNode; label: string }) {
  return (
    <button aria-label={label} className="h-[13px] w-[98px] border border-[#454545] bg-[#ffad00] leading-[11px] font-medium">
      {children}
    </button>
  );
}

function Check({ label, on }: { label: string; on: boolean }) {
  return (
    <span className="relative mx-auto block size-[13px]">
      <input
        type="checkbox"
        aria-label={label}
        defaultChecked={on}
        className="block size-[13px] appearance-none border border-[#454545] bg-[#b4b4b4] checked:bg-[#ffad00]"
      />
      {on && (
        <svg className="pointer-events-none absolute top-[3px] left-[3px]" width="8" height="7" viewBox="0 0 8 7">
          <path d="M0.500 4l2 2.500L7.500 0.500" fill="none" stroke="#000" strokeWidth="1.200" />
        </svg>
      )}
    </span>
  );
}

function Preferences() {
  return (
    <div
      role="dialog"
      aria-label="Préférences"
      className="absolute top-[324px] left-[921px] w-[500px] rounded-t bg-[#707070] text-[10px] leading-[15px] text-[#101010] shadow-[0_4px_14px_rgba(0,0,0,0.3)]"
    >
      <div className="flex h-[30px] items-center justify-between rounded-t bg-[#eef3fb] pr-px pl-2">
        <h2 className="font-['Open_Sans',sans-serif] text-[13px] text-[#1a1a1a]">Préférences</h2>
        <button aria-label="Fermer" className="mt-[3px] flex size-[19px] items-center justify-center bg-[#c75050]">
          <svg width="6" height="6" viewBox="0 0 6 6">
            <path d="M0.500 0.500l5 5M5.500 0.500l-5 5" stroke="#fff" strokeWidth="1.600" />
          </svg>
        </button>
      </div>
      <div className="flex px-[7px] pt-[7px] pb-[7px]">
        <div className="flex w-[87px] shrink-0 flex-col gap-[7px]">
          {prefTabs.map((tab) => (
            <button
              key={tab[0]}
              className={clsx(
                'flex flex-col bg-[#909090] py-[2px] pl-[5px] text-left font-semibold',
                tab[0] === 'Link' ? 'w-[88px] rounded-l' : 'w-20 rounded'
              )}
            >
              {tab.map((line) => (
                <span key={line}>{line}</span>
              ))}
            </button>
          ))}
        </div>
        <div className="relative flex-1 rounded-md bg-[#909090] pt-1 pr-4 pb-[17px] pl-[17px]">
          <PrefHeading>Link</PrefHeading>
          <PrefRow label="Afficher le bouton Link">
            <PrefButton label="Afficher le bouton Link">Afficher</PrefButton>
          </PrefRow>
          <PrefRow label="Synchro de démarrage arrêt">
            <PrefButton label="Synchro de démarrage arrêt">On</PrefButton>
          </PrefRow>
          <PrefHeading>Suiveur de tempo</PrefHeading>
          <PrefRow label="Afficher bouton suiveur de tempo">
            <PrefButton label="Afficher bouton suiveur de tempo">Afficher</PrefButton>
          </PrefRow>
          <PrefRow label="Canal d'entrée (Ext. In)">
            <Pick label="Canal d'entrée" value="1/2" dim small className="w-[98px]" />
          </PrefRow>
          <PrefHeading>MIDI</PrefHeading>

          <table className="w-[359px] table-fixed">
            <colgroup>
              <col className="w-[15px]" />
              <col className="w-[102px]" />
              <col className="w-[102px]" />
              <col className="w-[102px]" />
              <col className="w-[38px]" />
            </colgroup>
            <thead>
              <tr className="h-[18px]">
                <th />
                <th className="pr-[5px] font-normal whitespace-nowrap">Surface de contrôle</th>
                <th className="pr-[5px] font-normal">Entrée</th>
                <th className="pr-[5px] font-normal">Sortie</th>
                <th />
              </tr>
            </thead>
            <tbody>
              {surfaces.map((row, r) => (
                <tr key={r} className="h-[15px]">
                  <td>{r + 1}</td>
                  {row.map((value, c) => (
                    <td key={c} className="pr-[5px]">
                      {value ? (
                        <Pick label={`Port ${r + 1}`} value={value} small dim={c === 1 && r < 3} />
                      ) : (
                        <div className="h-[13px] border border-[#454545] bg-[#dcdcdc]" />
                      )}
                    </td>
                  ))}
                  <td>
                    <button className="block h-[13px] w-[38px] rounded-full border border-[#505050] bg-[#a0a0a0] leading-[11px] text-[#484848]">
                      Envoi
                    </button>
                  </td>
                </tr>
              ))}
            </tbody>
          </table>

          <div className="mt-4 flex h-[15px] items-center">
            <span className="w-[117px] pl-6">Mode de reprise</span>
            <Pick label="Mode de reprise" value="Aucun" small className="w-[97px]" />
          </div>

          <div className="mt-[10px] h-[235px] overflow-hidden">
            <table className="w-[364px] table-fixed">
              <colgroup>
                <col className="w-[17px]" />
                <col className="w-[195px]" />
                <col className="w-[38px]" />
                <col className="w-[38px]" />
                <col className="w-[38px]" />
                <col className="w-[38px]" />
              </colgroup>
              <thead>
                <tr className="h-5 border-b border-[#505050] align-top">
                  <th colSpan={2} className="text-left font-semibold">MIDI Ports</th>
                  {portColumns.map((c) => (
                    <th key={c} className="pl-[2px] font-semibold">{c}</th>
                  ))}
                </tr>
              </thead>
              <tbody className="before:block before:h-[9px] before:content-['']">
                {ports.map((p, r) => (
                  <tr key={r} className={r === 5 ? 'h-[19px]' : 'h-[18px]'}>
                    <td>
                      <svg className="ml-[3px] block" width="6" height="7" viewBox="0 0 6 7">
                        <path d="M0 0v7l6-3.500z" fill="#454545" />
                      </svg>
                    </td>
                    <td className="whitespace-nowrap">
                      <span className={clsx('inline-block', p.dir === 'In' ? 'w-[22px]' : 'w-[23px]')}>{p.dir}:</span>
                      {p.name}
                    </td>
                    {portColumns.map((c, i) => (
                      <td key={c}>
                        {(p.dir === 'In' || i < 3) && <Check label={`${p.dir} ${p.name} ${c}`} on={p.on.includes(i)} />}
                      </td>
                    ))}
                  </tr>
                ))}
              </tbody>
            </table>
          </div>
          <span className="absolute right-4 bottom-[72px] h-[123px] w-[7px] rounded-full bg-[#686868]" />
        </div>
      </div>
    </div>
  );
}

// ━━━━━━━━━━━━━━━━━━━━━━━━━━━━━━━━━━━━━━━━━━
// Detail view and status bar
// ━━━━━━━━━━━━━━━━━━━━━━━━━━━━━━━━━━━━━━━━━━

function Detail() {
  return (
    <div className="mt-[11px] flex h-[276px] shrink-0 gap-3">
      <section className="w-[223px] shrink-0 rounded-r-md bg-[#505050] py-[6px] pr-[5px]">
        <div className="h-full bg-[#909090]">
          <div className="h-6 bg-[#a8a8a8]" />
        </div>
      </section>
      <section className="flex flex-1 rounded-l-md bg-[#505050] py-[6px]">
        <div className="flex w-5 flex-col items-center justify-center gap-[2px]">
          {Array.from({ length: 10 }).map((_, i) => (
            <i key={i} className="size-1 rounded-full bg-[#151515]" />
          ))}
        </div>
        <div className="flex flex-1 items-center justify-center bg-[#909090] pl-2 text-[15px]">
          Déposer ici un instrument ou échantillon
        </div>
      </section>
    </div>
  );
}

function StatusBar() {
  return (
    <footer className="flex h-[43px] shrink-0">
      <div className="mt-3 mr-3 h-[30px] flex-1 rounded-r-md border-y-4 border-r-4 border-[#505050] bg-[#909090]" />
      <div className="mt-3 h-[30px] w-[290px] rounded-md border-4 border-[#505050] bg-[#909090]" />
      <button className="ml-[11px] h-[42px] w-16 rounded-b-md bg-[#505050] pt-3 text-sm font-medium">TR-626</button>
      <div className="w-6 overflow-hidden pt-[13px] pl-[11px]">
        <button aria-label="Show detail" className="block size-7 rounded-full bg-[#505050]">
          <svg width="28" height="28" viewBox="0 0 28 28">
            <path d="M14 5l9 16H5z" fill="#a8a8a8" />
          </svg>
        </button>
      </div>
    </footer>
  );
}

function Marks() {
  return (
    <svg className="pointer-events-none absolute inset-0 h-full w-full" fill="none" stroke="#4cff00" strokeWidth="10" aria-hidden="true">
      <ellipse cx="85" cy="38" rx="72" ry="50" />
      <ellipse cx="2405" cy="694" rx="47" ry="41" />
      <ellipse cx="1218" cy="710" rx="204" ry="16" />
      <ellipse cx="1195" cy="890" rx="188" ry="32" />
      <path
        d="M1959 1281v25l6-6 4 9 5-2-4-9h8z"
        fill="#000"
        stroke="#fff"
        strokeWidth="1.300"
      />
    </svg>
  );
}

const menus = ['Édition', 'Créer', 'Affichage', 'Options', 'Aide'];

export default function App() {
  return (
    <div className="relative flex min-h-screen flex-col overflow-hidden bg-[#707070] font-['Inter',sans-serif] text-black">
      <nav className="flex h-[7px] shrink-0 items-end gap-4 overflow-hidden border-b-2 border-[#ececec] bg-white">
        {menus.map((m, i) => (
          <button
            key={m}
            className={clsx(
              "shrink-0 font-['Open_Sans',sans-serif] text-[13px] leading-4 first-letter:underline",
              i === 0 && '-ml-4'
            )}
          >
            {m}
          </button>
        ))}
      </nav>
      <Transport />
      <div className="flex flex-1 gap-3">
        <Browser />
        <Arrangement />
      </div>
      <Detail />
      <StatusBar />
      <Preferences />
      <Marks />
    </div>
  );
}
